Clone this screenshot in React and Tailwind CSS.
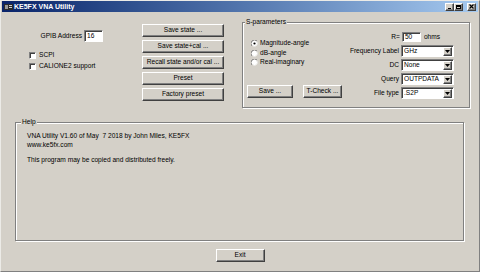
import React from 'react';

const RAISED =
  'bg-[#d4d0c8] border border-t-white border-l-white border-r-[#404040] border-b-[#404040] shadow-[inset_-1px_-1px_0_#808080]';
const SUNKEN =
  'bg-white border border-t-[#808080] border-l-[#808080] border-r-white border-b-white shadow-[inset_1px_1px_0_#404040]';
const ETCHED = 'border border-[#808080] shadow-[1px_1px_0_#ffffff,inset_1px_1px_0_#ffffff]';

function Btn({ children, className = '' }) {
  return (
    <div className={`${RAISED} flex items-center justify-center h-[13px] ${className}`}>
      <span className="leading-none">{children}</span>
    </div>
  );
}

function Field({ value, className = '' }) {
  return (
    <div className={`${SUNKEN} flex items-center pl-[2px] ${className}`}>
      <span className="leading-none">{value}</span>
    </div>
  );
}

function Select({ label, value }) {
  return (
    <div className="flex items-center gap-[2px]">
      <span className="leading-none">{label}</span>
      <div className={`${SUNKEN} flex items-center w-[53px] h-[12px] pl-[2px] pr-[1px]`}>
        <span className="flex-1 leading-none">{value}</span>
        <div className={`${RAISED} w-[9px] h-[9px] flex items-center justify-center`}>
          <svg width="5" height="3" viewBox="0 0 5 3">
            <polygon points="0,0 5,0 2.5,3" fill="#000" />
          </svg>
        </div>
      </div>
    </div>
  );
}

function Check({ label }) {
  return (
    <div className="flex items-center h-[11px] gap-[3px]">
      <div className={`${SUNKEN} w-[7px] h-[7px]`} />
      <span className="leading-none">{label}</span>
    </div>
  );
}

function Radio({ label, checked }) {
  return (
    <div className="flex items-center h-[9.5px] gap-[2px]">
      <svg width="7" height="7" viewBox="0 0 7 7">
        <circle cx="3.5" cy="3.5" r="3" fill="#fff" />
        <path d="M6 1 A3 3 0 0 0 1 6" fill="none" stroke="#808080" strokeWidth="1" />
        <path d="M1.5 5.5 A2.5 2.5 0 0 0 5.5 1.5" fill="none" stroke="#e6e4df" strokeWidth="0.8" />
        {checked && <circle cx="3.5" cy="3.5" r="1.1" fill="#000" />}
      </svg>
      <span className="leading-none">{label}</span>
    </div>
  );
}

function TitleButton({ children }) {
  return (
    <div className={`${RAISED} w-[9px] h-[8px] flex items-center justify-center`}>{children}</div>
  );
}

export default function App() {
  return (
    <div className="w-[480px] h-[272px] overflow-hidden bg-[#d4d0c8] text-black text-[6.6px] font-[family-name:'Liberation_Sans',Arial,sans-serif] flex flex-col border border-t-[#ecebe7] border-l-[#ecebe7] border-r-[#808080] border-b-[#808080]">
      {/* title bar */}
      <div className="h-[11px] mx-[1px] flex items-center bg-gradient-to-r from-[#0a246a] to-[#a6caf0] pl-[2px] pr-[2px]">
        <svg width="9" height="6" viewBox="0 0 9 6" className="mr-[1px]">
          <rect x="0" y="0" width="9" height="6" fill="#2b2b2b" />
          <rect x="1" y="1" width="3" height="4" fill="#9a9a9a" />
          <rect x="5" y="1" width="3" height="1" fill="#cfcfcf" />
          <rect x="5" y="3" width="3" height="1" fill="#cfcfcf" />
        </svg>
        <span className="text-white font-bold text-[7px] leading-none">KE5FX VNA Utility</span>
        <div className="ml-auto flex items-center">
          <TitleButton>
            <div className="w-[3px] h-[1px] bg-black mt-[3px] mr-[1px]" />
          </TitleButton>
          <TitleButton>
            <div className="w-[5px] h-[4px] border border-black border-t-2" />
          </TitleButton>
          <div className="w-[4px]" />
          <TitleButton>
            <svg width="5" height="5" viewBox="0 0 5 5">
              <path d="M0.5 0.5 L4.5 4.5 M4.5 0.5 L0.5 4.5" stroke="#000" strokeWidth="1.2" />
            </svg>
          </TitleButton>
        </div>
      </div>

      {/* top area */}
      <div className="flex pt-[10px]">
        {/* left column */}
        <div className="w-[141px] flex flex-col">
          <div className="w-[102px] mt-[8px] flex items-center justify-end gap-[2px]">
            <span className="leading-none">GPIB Address</span>
            <Field value="16" className="w-[19px] h-[12px]" />
          </div>
          <div className="pl-[28px] mt-[8px] flex flex-col">
            <Check label="SCPI" />
            <Check label="CALIONE2 support" />
          </div>
        </div>

        {/* button column */}
        <div className="w-[82px] mt-[2px] flex flex-col gap-[3px]">
          <Btn>Save state ...</Btn>
          <Btn>Save state+cal ...</Btn>
          <Btn>Recall state and/or cal ...</Btn>
          <Btn>Preset</Btn>
          <Btn>Factory preset</Btn>
        </div>

        {/* S-parameters group */}
        <div className={`${ETCHED} relative ml-[18px] w-[228px] h-[86px] flex pl-[4px] pr-[15px]`}>
          <span className="absolute left-[2px] top-[-4px] px-[1px] bg-[#d4d0c8] leading-none">S-parameters</span>
          <div className="flex flex-col">
            <div className="pl-[4px] mt-[16px] flex flex-col">
              <Radio label="Magnitude-angle" checked />
              <Radio label="dB-angle" />
              <Radio label="Real-imaginary" />
            </div>
            <div className="mt-auto mb-[9px] flex gap-[10px]">
              <Btn className="w-[46px]">Save ...</Btn>
              <Btn className="w-[39px]">T-Check ...</Btn>
            </div>
          </div>
          <div className="ml-auto flex flex-col items-end pt-[9px]">
            <div className="flex items-center gap-[2px] mr-[14px]">
              <span className="leading-none">R=</span>
              <Field value="50" className="w-[19px] h-[10px]" />
              <span className="leading-none ml-[1px]">ohms</span>
            </div>
            <div className="mt-[3px] flex flex-col items-end gap-[2px]">
              <Select label="Frequency Label" value="GHz" />
              <Select label="DC" value="None" />
              <Select label="Query" value="OUTPDATA" />
              <Select label="File type" value=".S2P" />
            </div>
          </div>
        </div>
      </div>

      {/* help group */}
      <div className={`${ETCHED} relative ml-[14px] mt-[14px] w-[449px] h-[119px] pl-[11px] pt-[8px]`}>
        <span className="absolute left-[5px] top-[-4px] px-[1px] bg-[#d4d0c8] leading-none">Help</span>
        <div className="leading-[9px] whitespace-pre">VNA Utility V1.60 of May  7 2018 by John Miles, KE5FX</div>
        <div className="leading-[9px]">www.ke5fx.com</div>
        <div className="leading-[9px] mt-[6px]">This program may be copied and distributed freely.</div>
      </div>

      {/* exit */}
      <div className="mt-[8px] flex justify-center">
        <Btn className="w-[49px]">Exit</Btn>
      </div>
    </div>
  );
}
